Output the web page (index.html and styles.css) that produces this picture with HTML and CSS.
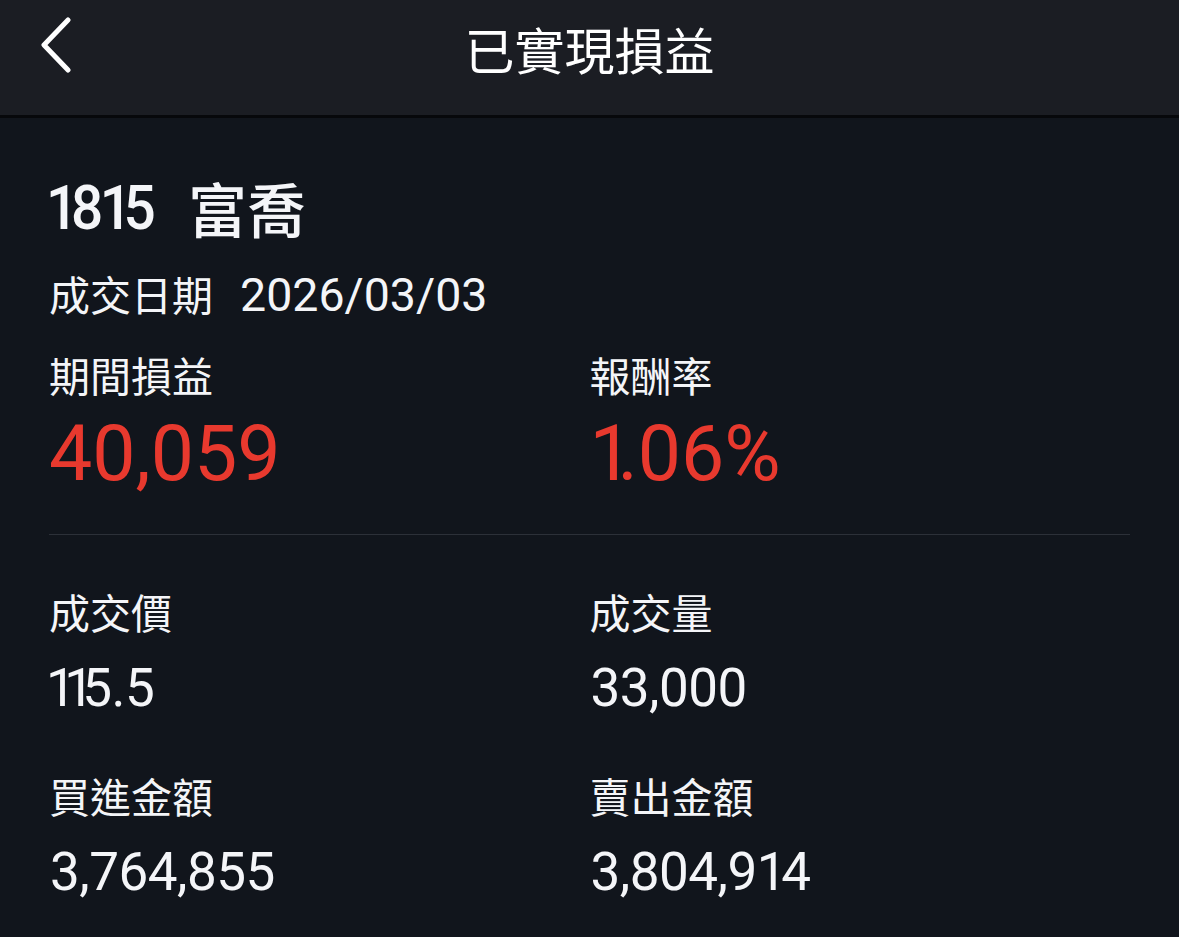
FILE: index.html
```html
<!DOCTYPE html>
<html lang="zh-Hant">
<head>
<meta charset="utf-8">
<title>已實現損益</title>
<link rel="stylesheet" href="styles.css">
</head>
<body>
<header class="topbar">
  <div class="topbar-left">
    <svg class="back-icon" width="34" height="60" viewBox="0 0 34 60" aria-hidden="true">
      <polyline points="28,3 4,28 28,53" fill="none" stroke="#ffffff" stroke-width="5" stroke-linecap="round" stroke-linejoin="round"/>
    </svg>
  </div>
  <h1 class="topbar-title">已實現損益</h1>
  <div class="topbar-right"></div>
</header>
<main class="content">
  <div class="stock-row">
    <span class="stock-code"><span class="one">1</span><span class="eight">8</span><span class="one two">1</span>5</span>
    <span class="stock-name">富喬</span>
  </div>
  <div class="date-row">
    <span class="date-label">成交日期</span>
    <span class="date-value">2026/03/03</span>
  </div>
  <div class="grid summary">
    <div class="cell">
      <div class="label">期間損益</div>
      <div class="big-value">40,059</div>
    </div>
    <div class="cell">
      <div class="label">報酬率</div>
      <div class="big-value"><span class="one">1</span>.06%</div>
    </div>
  </div>
  <div class="divider"></div>
  <div class="grid details">
    <div class="cell">
      <div class="label">成交價</div>
      <div class="value lead-one"><span class="one">1</span><span class="one">1</span>5.5</div>
    </div>
    <div class="cell">
      <div class="label">成交量</div>
      <div class="value">33,000</div>
    </div>
    <div class="cell">
      <div class="label">買進金額</div>
      <div class="value">3,764,855</div>
    </div>
    <div class="cell">
      <div class="label">賣出金額</div>
      <div class="value">3,804,9<span class="one soft">1</span>4</div>
    </div>
  </div>
</main>
</body>
</html>
```
FILE: styles.css
```css
html, body {
  margin: 0;
  padding: 0;
}
body {
  background: #11151c;
  color: #f4f5f8;
  font-family: "Noto Sans CJK TC", "Noto Sans", sans-serif;
  width: 1179px;
  height: 937px;
  overflow: hidden;
}
.topbar {
  height: 115px;
  background: #1b1d23;
  border-bottom: 3px solid #07080b;
  display: grid;
  grid-template-columns: 1fr auto 1fr;
  align-items: center;
}
.topbar-left {
  display: flex;
  align-items: center;
  padding-left: 40px;
  padding-bottom: 22px;
}
.back-icon {
  display: block;
}
.topbar-title {
  margin: 0;
  font-family: "Noto Sans CJK TC", sans-serif;
  font-weight: 400;
  font-size: 50px;
  line-height: 60px;
  color: #ffffff;
  padding-bottom: 20px;
}
.content {
  padding: 55px 49px 0 49px;
}
.stock-row {
  display: flex;
  align-items: center;
  height: 70px;
}
.stock-code {
  display: inline-block;
  font-family: "Roboto", sans-serif;
  font-weight: 500;
  font-size: 61px;
  line-height: 70px;
  margin-left: -3px;
  letter-spacing: -1px;
  transform: scaleX(0.93);
  transform-origin: left center;
}
.stock-code .one {
  letter-spacing: -0.13em;
}
.stock-code .eight {
  letter-spacing: -0.06em;
}
.stock-code .one.two {
  letter-spacing: -0.15em;
}
.stock-name {
  font-family: "Noto Sans CJK TC", sans-serif;
  font-weight: 500;
  font-size: 59px;
  line-height: 70px;
  margin-left: 25px;
}
.date-row {
  display: flex;
  align-items: center;
  height: 50px;
  margin-top: 27px;
}
.date-label {
  font-size: 41px;
  line-height: 50px;
  margin-top: -4px;
}
.date-value {
  font-family: "Roboto", sans-serif;
  font-size: 46.5px;
  line-height: 50px;
  margin-left: 27px;
}
.grid {
  display: grid;
  grid-template-columns: 1fr 1fr;
}
.summary {
  margin-top: 29px;
}
.label {
  font-size: 41px;
  line-height: 50px;
  color: #f4f5f8;
}
.big-value {
  font-family: "Roboto", sans-serif;
  font-weight: 400;
  font-size: 77px;
  line-height: 80px;
  color: #e8392e;
  margin-top: 15px;
}
.big-value .one {
  letter-spacing: -0.2em;
}
.divider {
  height: 1px;
  background: #2c3038;
  margin-top: 40px;
}
.details {
  margin-top: 51px;
  row-gap: 52px;
}
.value {
  font-family: "Roboto", sans-serif;
  font-weight: 400;
  font-size: 53px;
  line-height: 60px;
  margin-top: 22px;
  padding-left: 1px;
  letter-spacing: -0.5px;
}
.value.lead-one {
  margin-left: -4px;
}
.value .one {
  letter-spacing: -0.22em;
}
.value .one.soft {
  letter-spacing: -0.1em;
}
```
